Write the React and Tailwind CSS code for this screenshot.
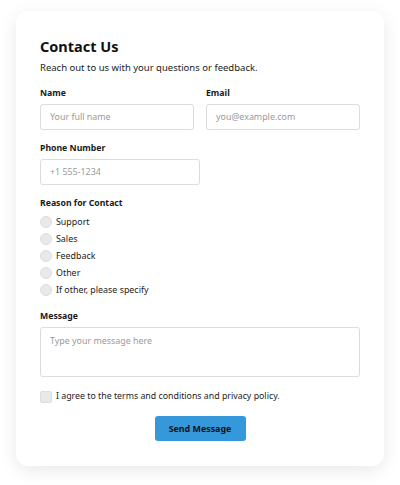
import React from "react";

const font = { fontFamily: '"Noto Sans", "Open Sans", sans-serif' };

function Label({ children }) {
  return (
    <div className="text-[8.7px] leading-[14px] font-bold text-[#1a1a1a]">{children}</div>
  );
}

function Input({ placeholder, className = "" }) {
  return (
    <div
      className={`h-[26px] mt-[4px] rounded-[3px] border border-[#dcdcdc] bg-white px-[9px] flex items-center text-[8.9px] text-[#9a9a9a] ${className}`}
    >
      {placeholder}
    </div>
  );
}

function Radio({ label }) {
  return (
    <div className="h-[17px] flex items-center gap-[4px]">
      <span className="w-[12px] h-[12px] rounded-full bg-[#e9e9e9] border border-[#dddddd] shrink-0" />
      <span className="text-[8.9px] text-[#222]">{label}</span>
    </div>
  );
}

export default function App() {
  return (
    <div className="w-[400px] h-[485px] bg-white px-4 pt-[11px]" style={font}>
      <div className="w-[368px] rounded-[12px] bg-white px-6 pt-[23px] pb-[25px] shadow-[0_4px_18px_rgba(0,0,0,0.09)]">
        <h1 className="text-[14.5px] leading-[24px] font-bold text-[#111]">Contact Us</h1>
        <p className="mt-[2px] text-[9.5px] leading-[16px] text-[#222]">
          Reach out to us with your questions or feedback.
        </p>

        <div className="mt-[10px] grid grid-cols-2 gap-3">
          <div>
            <Label>Name</Label>
            <Input placeholder="Your full name" />
          </div>
          <div>
            <Label>Email</Label>
            <Input placeholder="you@example.com" />
          </div>
        </div>

        <div className="mt-[11px] w-[160px]">
          <Label>Phone Number</Label>
          <Input placeholder="+1 555-1234" />
        </div>

        <div className="mt-[11px]">
          <Label>Reason for Contact</Label>
          <div className="mt-[3px] flex flex-col">
            <Radio label="Support" />
            <Radio label="Sales" />
            <Radio label="Feedback" />
            <Radio label="Other" />
            <Radio label="If other, please specify" />
          </div>
        </div>

        <div className="mt-[11px]">
          <Label>Message</Label>
          <div className="h-[50px] mt-[4px] rounded-[3px] border border-[#dcdcdc] bg-white px-[9px] pt-[6px] text-[8.9px] leading-[14px] text-[#9a9a9a]">
            Type your message here
          </div>
        </div>

        <div className="mt-[11px] h-[18px] flex items-center gap-[4px]">
          <span className="w-[12px] h-[12px] rounded-[2px] bg-[#e9e9e9] border border-[#dddddd] shrink-0" />
          <span className="text-[8.8px] text-[#222]">
            I agree to the terms and conditions and privacy policy.
          </span>
        </div>

        <div className="mt-[10px] flex justify-center">
          <div className="h-[25px] w-[91px] rounded-[3px] bg-[#3498db] flex items-center justify-center text-[8.9px] font-bold text-[#111]">
            Send Message
          </div>
        </div>
      </div>
    </div>
  );
}
